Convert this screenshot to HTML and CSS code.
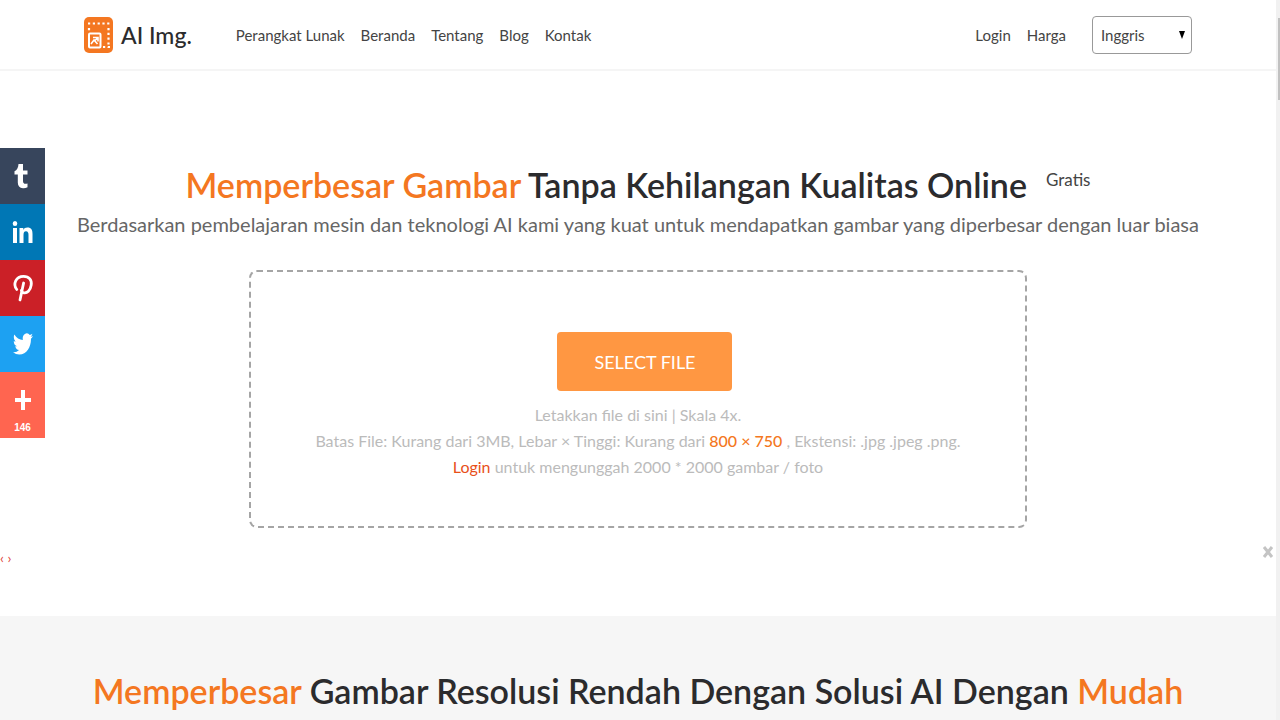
FILE: index.html
```html
<!DOCTYPE html>
<html lang="id">
<head>
  <meta charset="utf-8">
  <meta name="viewport" content="width=device-width,initial-scale=1">

  <title>AI Img.</title>

  <link rel="stylesheet" href="styles.css">
</head>
<body>
  <header class="header">
    <a class="brand" href="#">
      <svg class="brand-icon" viewBox="0 0 29 36" width="29" height="36" aria-hidden="true">
        <rect width="29" height="36" rx="5" fill="#f47721"/>
        <path d="M4 6.500H26M24.500 11V31M5 11V14M19 30H26" fill="none" stroke="#fff" stroke-width="2.200" stroke-dasharray="2.200 2.600"/>
        <rect x="5" y="16.500" width="11.500" height="14" rx="1" fill="none" stroke="#fff" stroke-width="2"/>
        <path d="M7 27L10 23L13.500 27M9 20.500H14V24.500M14 20.500L10.500 24" fill="none" stroke="#fff" stroke-width="1.600"/>
      </svg>
      <span>AI Img.</span>
    </a>

    <nav class="nav">
      <a href="#">Perangkat Lunak</a>
      <a href="#">Beranda</a>
      <a href="#">Tentang</a>
      <a href="#">Blog</a>
      <a href="#">Kontak</a>
    </nav>

    <nav class="nav nav-account">
      <a href="#">Login</a>
      <a href="#">Harga</a>
    </nav>

    <div class="language">
      <select name="language" aria-label="Bahasa">
        <option>Inggris</option>
      </select>
      <svg class="language-arrow" viewBox="0 0 6 8" width="6" height="8" aria-hidden="true"><path d="M0 0H6L3 8Z"/></svg>
    </div>
  </header>

  <main>
    <section class="hero">
      <div class="hero-title">
        <h1><span class="accent">Memperbesar Gambar</span> Tanpa Kehilangan Kualitas Online</h1>
        <span class="free">Gratis</span>
      </div>
      <p class="lead">Berdasarkan pembelajaran mesin dan teknologi AI kami yang kuat untuk mendapatkan gambar yang diperbesar dengan luar biasa</p>

      <div class="dropzone">
        <button class="select-file" type="button">SELECT FILE</button>
        <p>Letakkan file di sini | Skala 4x.</p>
        <p>Batas File: Kurang dari 3MB, Lebar × Tinggi: Kurang dari <b>800 × 750</b> , Ekstensi: .jpg .jpeg .png.</p>
        <p><a href="#">Login</a> untuk mengunggah 2000 * 2000 gambar / foto</p>
      </div>

      <div class="hero-footer">
        <span class="arrows">‹ ›</span>
        <button class="close" type="button" aria-label="Tutup">
          <svg viewBox="0 0 12 12" width="12" height="12"><path d="M2 1L10 11M10 1L2 11" fill="none" stroke="#c4c4c4" stroke-width="3"/></svg>
        </button>
      </div>
    </section>

    <section class="solution">
      <h2><span class="accent">Memperbesar</span> Gambar Resolusi Rendah Dengan Solusi AI Dengan <span class="accent">Mudah</span></h2>
    </section>
  </main>

  <aside class="share">
    <a class="tumblr" href="#" aria-label="Tumblr">
      <svg viewBox="0 0 24 26" width="24" height="26"><path fill="#fff" d="M7.500 1H12V7.500H16.500V11.500H12V18C12 20.500 13.500 21.400 16.500 20.500V24.300C15 25 13.500 25.300 12 25.200C8.500 25 6.800 22.900 6.800 19.500V11.500H3.500V8.300C6 7.200 7.300 4.700 7.500 1Z"/></svg>
    </a>
    <a class="linkedin" href="#" aria-label="LinkedIn">
      <svg viewBox="0 0 24 26" width="24" height="26"><path fill="#fff" d="M2 9H6V24H2ZM4 2A2.300 2.500 0 1 1 4 7A2.300 2.500 0 1 1 4 2ZM8.500 9H12.300V11C13.200 9.400 14.500 8.600 16.300 8.600C20.500 8.600 21.500 11.200 21.500 15V24H17.500V16C17.500 14 17 12.200 15 12.200C13 12.200 12.500 13.900 12.500 16V24H8.500Z"/></svg>
    </a>
    <a class="pinterest" href="#" aria-label="Pinterest">
      <svg viewBox="0 0 24 28" width="24" height="28"><path fill="none" stroke="#fff" stroke-width="2.800" stroke-linecap="round" stroke-linejoin="round" d="M5.800 15.500C1.500 10 5 2.300 12.500 2.300C18.300 2.300 21 6 20.200 11C19.300 17 16 19.300 13 18.800C11.400 18.500 10.400 17.500 10.400 16.300M12.600 9L9 26"/></svg>
    </a>
    <a class="twitter" href="#" aria-label="Twitter">
      <svg viewBox="0 0 24 24" width="20" height="26" preserveAspectRatio="none"><path fill="#fff" d="M23.950 4.570a10 10 0 0 1-2.820.77 4.960 4.960 0 0 0 2.160-2.720c-.95.550-2 .95-3.120 1.180a4.920 4.920 0 0 0-8.380 4.480C7.690 8.090 4.070 6.130 1.640 3.160a4.820 4.820 0 0 0-.67 2.480c0 1.710.87 3.210 2.190 4.090a4.900 4.900 0 0 1-2.230-.61v.06a4.920 4.920 0 0 0 3.950 4.830 5 5 0 0 1-2.210.08 4.940 4.940 0 0 0 4.600 3.420A9.870 9.870 0 0 1 0 19.540a13.990 13.990 0 0 0 7.550 2.210c9.050 0 14-7.500 14-13.980 0-.21 0-.42-.02-.63a9.940 9.940 0 0 0 2.420-2.570Z"/></svg>
    </a>
    <a class="more" href="#" aria-label="146">
      <svg viewBox="0 0 16 20" width="16" height="20"><path d="M8 0V20M0 10H16" stroke="#fff" stroke-width="4"/></svg>
      <span>146</span>
    </a>
  </aside>

  <div class="scrollbar"><div class="scrollbar-thumb"></div></div>
</body>
</html>
```
FILE: styles.css
```css
*, :after, :before {
  box-sizing: border-box;
}

body {
  margin: 0;
  padding-right: 4px;
  background-color: #fff;
  color: #444;
  font-family: Lato, sans-serif;
  font-size: 15px;
  line-height: 26px;
}

a {
  color: inherit;
  text-decoration: none;
}

h1, h2, p {
  margin: 0;
}

.header {
  display: flex;
  align-items: center;
  height: 71px;
  padding: 1px 84px 0;
  border-bottom: 2px solid #f5f5f5;
}

.brand {
  display: flex;
  align-items: center;
  gap: 8px;
  margin-right: 44px;
  color: #2b2b2d;
  font-size: 23px;
  font-weight: 500;
}

.brand-icon {
  display: block;
}

.nav {
  display: flex;
  gap: 16px;
}

.nav-account {
  margin-left: auto;
}

.language {
  position: relative;
  margin-left: 26px;
}

.language select {
  display: block;
  width: 100px;
  height: 38px;
  padding: 0 8px;
  border: 1px solid #999;
  border-radius: 4px;
  background-color: #fff;
  color: #444;
  font: inherit;
  appearance: none;
}

.language-arrow {
  position: absolute;
  top: 15px;
  right: 7px;
  pointer-events: none;
}

.hero {
  padding-top: 90px;
  text-align: center;
}

.hero-title {
  display: flex;
  justify-content: center;
  gap: 19px;
}

h1, h2 {
  color: #2b2b2d;
  font-size: 34px;
  font-weight: 600;
  line-height: 48px;
}

.accent {
  color: #f47721;
}

.free {
  padding-top: 6px;
  font-size: 17px;
}

.lead {
  color: #666;
  font-size: 20px;
  line-height: 30px;
}

.dropzone {
  width: 61%;
  min-height: 258px;
  margin: 31px auto 0;
  padding: 60px 16px 46px;
  border: 2px dashed #a5a5a5;
  border-radius: 8px;
  color: #bbb;
  font-size: 16px;
}

.dropzone a {
  color: #e8501a;
}

.dropzone b {
  color: #f47721;
  font-weight: 500;
}

.select-file {
  width: 175px;
  height: 59px;
  margin: 0 0 11px 14px;
  border: 0;
  border-radius: 4px;
  background-color: #ff9742;
  color: #fff;
  font: inherit;
  font-size: 18px;
  vertical-align: top;
}

.hero-footer {
  display: flex;
  justify-content: space-between;
  height: 88px;
  padding: 18px 2px 0 0;
}

.arrows {
  color: #e0453c;
  font-size: 14px;
  line-height: 24px;
}

.close {
  display: block;
  width: 12px;
  height: 12px;
  padding: 0;
  border: 0;
  background: none;
}

.close svg {
  display: block;
}

.solution {
  padding: 51px 16px 5px;
  background-color: #f6f6f6;
  text-align: center;
}

/* Share buttons stay at the left edge while the page scrolls */
.share {
  position: fixed;
  top: 148px;
  left: 0;
  width: 45px;
}

.share a {
  display: flex;
  flex-direction: column;
  align-items: center;
  justify-content: center;
  height: 56px;
  color: #fff;
}

.share .tumblr {
  background-color: #37455c;
}

.share .linkedin {
  background-color: #0077b5;
}

.share .pinterest {
  background-color: #cb2027;
}

.share .twitter {
  background-color: #1da1f2;
}

.share .more {
  gap: 12px;
  height: 66px;
  padding-top: 14px;
  background-color: #ff6550;
  font-family: "Liberation Sans", sans-serif;
  font-size: 10px;
  font-weight: bold;
  line-height: 12px;
}

.scrollbar {
  position: fixed;
  top: 0;
  right: 0;
  bottom: 0;
  width: 4px;
  padding-top: 18px;
  background-color: #f1f1f1;
}

.scrollbar-thumb {
  height: 82px;
  margin-left: 2px;
  background-color: #c1c1c1;
}
```
